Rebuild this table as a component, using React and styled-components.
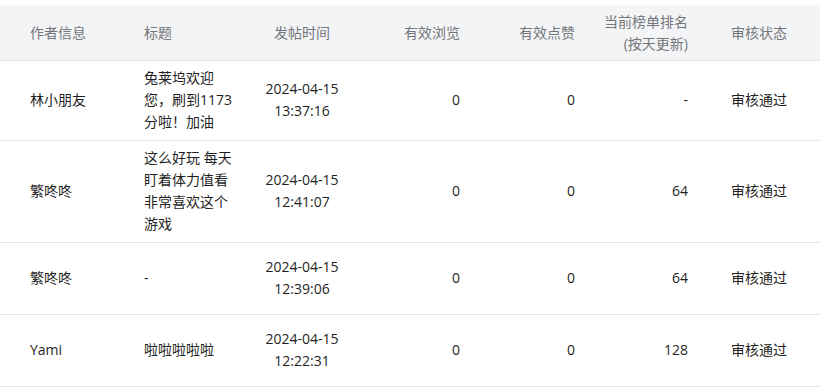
import styled, { createGlobalStyle } from 'styled-components'

const GlobalStyle = createGlobalStyle`
  html, body {
    margin: 0;
    padding: 0;
    background: #ffffff;
  }
  body {
    font-family: "Open Sans", "Noto Sans CJK SC", sans-serif;
    font-size: 14px;
    color: #222;
  }
`

const COLUMNS = '128px 122px 104px 122px 115px 115px 114px'

const Table = styled.div`
  width: 820px;
  padding-top: 5px;
`

const HeadRow = styled.div`
  display: grid;
  grid-template-columns: ${COLUMNS};
  align-items: center;
  height: 56px;
  box-sizing: border-box;
  background: #f3f4f6;
  border-bottom: 1px solid #e2e3e5;
  color: #73767a;
`

const Row = styled.div`
  display: grid;
  grid-template-columns: ${COLUMNS};
  align-items: center;
  min-height: 72px;
  box-sizing: border-box;
  padding: 6px 0 7px;
  border-bottom: 1px solid #e6e6e6;
  color: #1f1f1f;
`

const Cell = styled.div`
  box-sizing: border-box;
  line-height: 22px;
  text-align: ${(props) => props.$align || 'left'};
  padding-left: ${(props) => props.$pl || 0}px;
  padding-right: ${(props) => props.$pr || 0}px;
  word-break: break-all;
`

const cols = [
  { align: 'left', pl: 30 },
  { align: 'left', pl: 16, pr: 14 },
  { align: 'center' },
  { align: 'right', pr: 16 },
  { align: 'right', pr: 16 },
  { align: 'right', pr: 18 },
  { align: 'left', pl: 25 },
]

const headers = [
  '作者信息',
  '标题',
  '发帖时间',
  '有效浏览',
  '有效点赞',
  <>
    当前榜单排名
    <br />
    (按天更新)
  </>,
  '审核状态',
]

const rows = [
  ['林小朋友', '兔莱坞欢迎您，刷到1173分啦！加油', ['2024-04-15', '13:37:16'], '0', '0', '-', '审核通过'],
  ['繁咚咚', '这么好玩 每天盯着体力值看非常喜欢这个游戏', ['2024-04-15', '12:41:07'], '0', '0', '64', '审核通过'],
  ['繁咚咚', '-', ['2024-04-15', '12:39:06'], '0', '0', '64', '审核通过'],
  ['Yami', '啦啦啦啦啦', ['2024-04-15', '12:22:31'], '0', '0', '128', '审核通过'],
]

function renderValue(value) {
  if (Array.isArray(value)) {
    return (
      <>
        {value[0]}
        <br />
        {value[1]}
      </>
    )
  }
  return value
}

export default function App() {
  return (
    <>
      <GlobalStyle />
      <Table>
        <HeadRow>
          {headers.map((h, i) => (
            <Cell key={i} $align={cols[i].align} $pl={cols[i].pl} $pr={cols[i].pr}>
              {h}
            </Cell>
          ))}
        </HeadRow>
        {rows.map((row, r) => (
          <Row key={r}>
            {row.map((v, i) => (
              <Cell key={i} $align={cols[i].align} $pl={cols[i].pl} $pr={cols[i].pr}>
                {renderValue(v)}
              </Cell>
            ))}
          </Row>
        ))}
      </Table>
    </>
  )
}
